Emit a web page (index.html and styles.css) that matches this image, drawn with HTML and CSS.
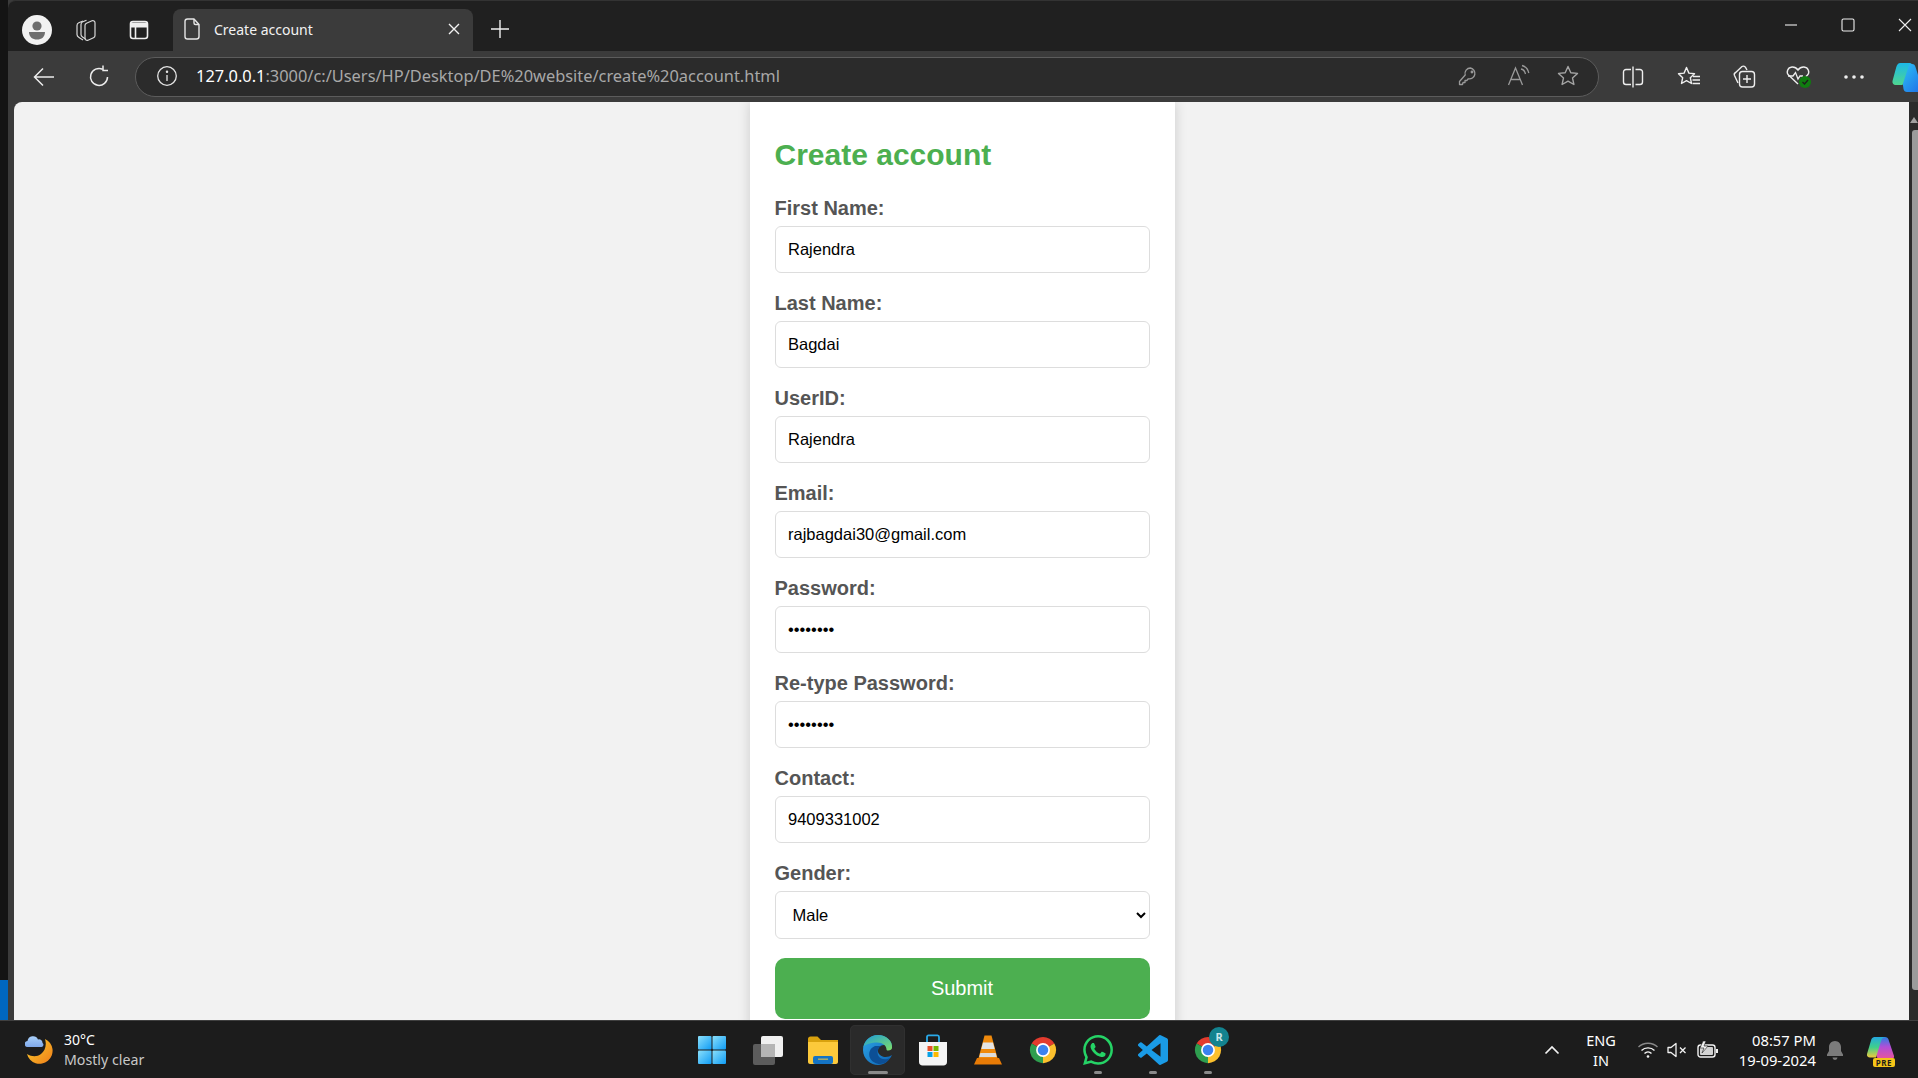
FILE: index.html
```html
<!DOCTYPE html>
<html lang="en">
<head>
<meta charset="utf-8">
<title>Create account</title>
<link rel="stylesheet" href="styles.css">
</head>
<body>
<svg class="defs" width="0" height="0" aria-hidden="true">
  <defs>
    <linearGradient id="copilot-a" x1="0" y1="0" x2="1" y2="1"><stop offset="0" stop-color="#2dc6f5"/><stop offset="1" stop-color="#1f6ee8"/></linearGradient>
    <linearGradient id="copilot-b" x1="0" y1="0" x2="0" y2="1"><stop offset="0" stop-color="#1cb8e8"/><stop offset="1" stop-color="#4fd68f"/></linearGradient>
    <linearGradient id="edge-a" x1="0" y1="0" x2="1" y2="1"><stop offset="0" stop-color="#2ea5e6"/><stop offset="1" stop-color="#0b63b5"/></linearGradient>
    <linearGradient id="edge-b" x1="0" y1="0" x2="1" y2="1"><stop offset="0" stop-color="#1c9bd6"/><stop offset="1" stop-color="#7fe06a"/></linearGradient>
    <linearGradient id="win" x1="0" y1="0" x2="1" y2="1"><stop offset="0" stop-color="#8be0fb"/><stop offset="1" stop-color="#0f9cf5"/></linearGradient>
    <linearGradient id="moon" x1="0" y1="0" x2="1" y2="1"><stop offset="0" stop-color="#fad02c"/><stop offset="1" stop-color="#ef7d1a"/></linearGradient>
    <linearGradient id="pre" x1="0" y1="0" x2="0" y2="1"><stop offset="0" stop-color="#25a8e0"/><stop offset=".5" stop-color="#3fd08a"/><stop offset="1" stop-color="#f0c93a"/></linearGradient>
    <linearGradient id="pre-b" x1="0" y1="0" x2="0" y2="1"><stop offset="0" stop-color="#2b7fe0"/><stop offset=".45" stop-color="#b04fd8"/><stop offset="1" stop-color="#e8559a"/></linearGradient>
    <linearGradient id="cloud" x1="0" y1="0" x2="0" y2="1"><stop offset="0" stop-color="#a9d0fa"/><stop offset="1" stop-color="#7fa8ea"/></linearGradient>
    <symbol id="chrome" viewBox="0 0 32 32">
      <path d="M16 16 3.9 9A14 14 0 0 1 28.1 9Z" fill="#e33b2e"/>
      <path d="M16 16 28.1 9A14 14 0 0 1 16 30Z" fill="#fbc02d"/>
      <path d="M16 16V30A14 14 0 0 1 3.9 9Z" fill="#2e9e4f"/>
      <circle cx="16" cy="16" r="7.4" fill="#fff"/>
      <circle cx="16" cy="16" r="5.6" fill="#3b82f0"/>
    </symbol>
  </defs>
</svg>

<div class="desktop">
  <div class="work">
    <div class="edge-strip"><div class="edge-strip-blue"></div></div>
    <div class="browser">
      <div class="tabstrip">
        <div class="strip-btn w50">
          <svg width="32" height="32" viewBox="0 0 32 32"><circle cx="16" cy="16" r="15" fill="#f2f2f2"/><circle cx="16" cy="12" r="4.6" fill="#6e6e6e"/><path d="M8 18h16c0 5-3.500 7.500-8 7.500S8 23 8 18z" fill="#6e6e6e"/></svg>
        </div>
        <div class="strip-btn w48">
          <svg width="24" height="24" viewBox="0 0 24 24" fill="none" stroke="#d8d8d8" stroke-width="1.200" stroke-linejoin="round"><path d="M9 22 5 19.500C3.800 18.800 3 17.800 3 16.500V7.500C3 6.300 3.700 5.300 4.800 4.800L9 3"/><path d="M11.500 21 8.500 19C7.600 18.400 7 17.500 7 16.500V6.500C7 5.300 7.700 4.300 8.800 3.800L12.500 2.200"/><path d="M11 7.500C11 6.500 11.600 5.700 12.500 5.300L18 2.800C19.500 2.200 21 3.200 21 4.700V17.500C21 18.500 20.400 19.300 19.500 19.700L14 22.200C12.500 22.800 11 21.800 11 20.300Z"/></svg>
        </div>
        <div class="strip-btn w58">
          <svg width="22" height="22" viewBox="0 0 22 22" fill="none" stroke="#eee" stroke-width="1.600"><rect x="2.500" y="2.500" width="17" height="17" rx="2.500"/><path d="M2.500 6h17" stroke-width="5"/><path d="M7.500 8v11"/></svg>
        </div>
        <div class="tab">
          <svg width="20" height="24" viewBox="0 0 20 24" fill="none" stroke="#e6e6e6" stroke-width="1.400" stroke-linejoin="round"><path d="M3 4.500C3 3.100 4.100 2 5.500 2H12l5 5.500v12c0 1.400-1.100 2.500-2.500 2.500h-9A2.500 2.500 0 0 1 3 19.500Z"/><path d="M12 2v4c0 1 .6 1.500 1.500 1.500H17"/></svg>
          <span class="tab-title">Create account</span>
          <svg class="tab-close" width="12" height="12" viewBox="0 0 12 12" stroke="#f2f2f2" stroke-width="1.400"><path d="M1 1l10 10M11 1 1 11"/></svg>
        </div>
        <div class="strip-btn w54 new-tab">
          <svg width="20" height="20" viewBox="0 0 20 20" stroke="#f0f0f0" stroke-width="1.400"><path d="M10 1v18M1 10h18"/></svg>
        </div>
        <div class="win-controls">
          <div class="win-btn"><svg width="14" height="14" viewBox="0 0 14 14" stroke="#eee" stroke-width="1.100"><path d="M1 7h12"/></svg></div>
          <div class="win-btn"><svg width="14" height="14" viewBox="0 0 14 14" fill="none" stroke="#eee" stroke-width="1.100"><rect x="1" y="1" width="12" height="12" rx="1.500"/></svg></div>
          <div class="win-btn"><svg width="14" height="14" viewBox="0 0 14 14" stroke="#eee" stroke-width="1.100"><path d="M1 1l12 12M13 1 1 13"/></svg></div>
        </div>
      </div>

      <div class="toolbar">
        <div class="tool-btn back">
          <svg width="24" height="24" viewBox="0 0 24 24" fill="none" stroke="#ececec" stroke-width="1.500"><path d="M22 12H2.500M11 3.500 2.500 12l8.500 8.500"/></svg>
        </div>
        <div class="tool-btn reload">
          <svg width="24" height="24" viewBox="0 0 24 24" fill="none" stroke="#ececec" stroke-width="1.500"><path d="M20.500 12A8.500 8.500 0 1 1 15.700 4.300"/><path d="M16 0.500v5h5"/></svg>
        </div>
        <div class="address">
          <svg class="addr-info" width="22" height="22" viewBox="0 0 22 22" fill="none" stroke="#e4e4e4" stroke-width="1.300"><circle cx="11" cy="11" r="9.300"/><path d="M11 10v6"/><circle cx="11" cy="6.800" r=".6" fill="#e4e4e4"/></svg>
          <span class="url"><span class="url-host">127.0.0.1</span>:3000/c:/Users/HP/Desktop/DE%20website/create%20account.html</span>
          <div class="addr-actions">
            <div class="addr-btn"><svg width="22" height="22" viewBox="0 0 22 22" fill="none" stroke="#9a9a9a" stroke-width="1.300" stroke-linejoin="round"><path d="M13.500 3a5.500 5.500 0 0 0-5.300 7l-5.700 6.500V19.500h3l.5-2h2v-2h1.800l1.500-1.700A5.500 5.500 0 1 0 13.500 3Z"/><circle cx="15" cy="7" r=".8"/></svg></div>
            <div class="addr-btn"><svg width="24" height="24" viewBox="0 0 24 24" fill="none" stroke="#9a9a9a" stroke-width="1.300"><path d="M2.500 21 9.500 4l7 17M5 15.500h9"/><path d="M15 5c2.500.5 4 2.500 4.500 5M16 1.500c3.500.8 6 3.500 6.800 7.500"/></svg></div>
            <div class="addr-btn"><svg width="24" height="24" viewBox="0 0 24 24" fill="none" stroke="#a5a5a5" stroke-width="1.400" stroke-linejoin="round"><path d="M12 2.500l2.800 6.200 6.700.7-5 4.500 1.400 6.600L12 17.200l-5.900 3.300 1.400-6.600-5-4.500 6.700-.7Z"/></svg></div>
          </div>
        </div>
        <div class="tool-right">
          <div class="tool-btn r56"><svg width="24" height="24" viewBox="0 0 24 24" fill="none" stroke="#eee" stroke-width="1.400"><path d="M10 4.500H5A2.500 2.500 0 0 0 2.500 7v10A2.500 2.500 0 0 0 5 19.500h5M14.500 4.500H19A2.500 2.500 0 0 1 21.500 7v10a2.500 2.500 0 0 1-2.500 2.500h-4.500M12 1.500v21"/></svg></div>
          <div class="tool-btn r56"><svg width="26" height="24" viewBox="0 0 26 24" fill="none" stroke="#eee" stroke-width="1.400" stroke-linejoin="round"><path d="M10.500 2.500l2.400 5.600 5.600.6-4.200 4 1.200 5.800-5-2.900-5 2.900 1.200-5.800-4.200-4 5.600-.6Z"/><path d="M17 11.500h7M16.500 15h7.500M16.500 18.500h7.500"/></svg></div>
          <div class="tool-btn r54"><svg width="26" height="26" viewBox="0 0 26 26" fill="none" stroke="#eee" stroke-width="1.400" stroke-linejoin="round"><path d="M7 19 3.500 11.500C3 10.300 3.500 9 4.700 8.500L11 2.500c1-.6 2.500-.2 3.500.8L16 6"/><rect x="8.500" y="7.500" width="15" height="15.500" rx="3"/><path d="M16 11v8M12 15h8"/></svg></div>
          <div class="tool-btn r56"><svg width="28" height="26" viewBox="0 0 28 26" fill="none"><path d="M13 20 3.500 11C1 8.300 2.500 3.500 7 3c2.500-.2 4.500 1 6 3 1.500-2 3.500-3.200 6-3 4.500.5 6 5.300 3.500 8l-2 2" stroke="#eee" stroke-width="1.400"/><path d="M3 12h5l2.500-3.500L13 15l2-3h3" stroke="#eee" stroke-width="1.300"/><circle cx="20" cy="18" r="6" fill="#107c10"/><path d="M17.500 18l2 2 3.500-4" stroke="#1d1d1d" stroke-width="1.400"/></svg></div>
          <div class="tool-btn r54"><svg width="22" height="6" viewBox="0 0 22 6" fill="#eee"><circle cx="3" cy="3" r="1.800"/><circle cx="11" cy="3" r="1.800"/><circle cx="19" cy="3" r="1.800"/></svg></div>
          <div class="tool-btn r-copilot"><svg width="34" height="30" viewBox="0 0 34 30"><path d="M8 2h12c2 0 3 1 3.500 3L30 26c.5 2-1 4-3 4H15c-2 0-3-1-3.500-3Z" fill="url(#copilot-a)"/><path d="M8.500 1C6 1 5 3 4.300 5L.5 19c-.5 2 1 4 3 4h7L16 6c.5-2.500 2-5 5-5Z" fill="url(#copilot-b)"/></svg></div>
        </div>
      </div>

      <div class="content">
        <main class="page">
          <form class="card">
            <h1 class="card-title">Create account</h1>
            <div class="field"><label class="field-label" for="first">First Name:</label><input class="field-input" id="first" type="text" value="Rajendra"></div>
            <div class="field"><label class="field-label" for="last">Last Name:</label><input class="field-input" id="last" type="text" value="Bagdai"></div>
            <div class="field"><label class="field-label" for="uid">UserID:</label><input class="field-input" id="uid" type="text" value="Rajendra"></div>
            <div class="field"><label class="field-label" for="email">Email:</label><input class="field-input" id="email" type="text" value="rajbagdai30@gmail.com"></div>
            <div class="field"><label class="field-label" for="pw">Password:</label><input class="field-input" id="pw" type="password" value="password"></div>
            <div class="field"><label class="field-label" for="pw2">Re-type Password:</label><input class="field-input" id="pw2" type="password" value="password"></div>
            <div class="field"><label class="field-label" for="contact">Contact:</label><input class="field-input" id="contact" type="text" value="9409331002"></div>
            <div class="field"><label class="field-label" for="gender">Gender:</label><select class="field-input field-select" id="gender"><option>Male</option><option>Female</option></select></div>
            <button class="submit" type="button">Submit</button>
          </form>
        </main>
        <div class="scrollbar"><div class="scroll-arrow"></div><div class="scroll-thumb"></div></div>
      </div>
    </div>
  </div>

  <footer class="taskbar">
    <div class="weather">
      <svg width="28" height="28" viewBox="0 0 28 28"><path d="M20 3a13 13 0 1 1-18 15c5 3 10 3 14 0 4-3 6-9 4-15Z" fill="url(#moon)"/><path d="M3 11a3 3 0 0 1-.5-6 5.500 5.500 0 0 1 10.500-1.500 3.500 3.500 0 0 1 4.500 3.500 2.200 2.200 0 0 1-1 4Z" fill="url(#cloud)"/></svg>
      <div class="weather-text"><div class="temp">30°C</div><div class="cond">Mostly clear</div></div>
    </div>

    <div class="apps">
      <div class="app app-start"><svg width="30" height="30" viewBox="0 0 30 30" fill="url(#win)"><rect x="1" y="1" width="13.500" height="13.500" rx="1"/><rect x="15.500" y="1" width="13.500" height="13.500" rx="1"/><rect x="1" y="15.500" width="13.500" height="13.500" rx="1"/><rect x="15.500" y="15.500" width="13.500" height="13.500" rx="1"/></svg></div>
      <div class="app"><svg width="32" height="30" viewBox="0 0 32 30"><rect x="1" y="9" width="22" height="21" rx="2" fill="#5c5c5c"/><rect x="9" y="1" width="22" height="21" rx="2" fill="#f0f0f0"/><rect x="9" y="9" width="14" height="13" fill="#b5b5b5"/></svg></div>
      <div class="app"><svg width="30" height="28" viewBox="0 0 30 28"><path d="M0 3c0-1.500 1-2.500 2.500-2.500h7L13 4h17v6H0Z" fill="#d9a20e"/><path d="M0 6h30v20c0 1-1 2-2 2H2c-1 0-2-1-2-2Z" fill="#fcc93b"/><rect x="5" y="20" width="20" height="8" rx="2" fill="#1574c4"/><rect x="10" y="22.500" width="10" height="1.400" fill="#fcc93b" opacity=".7"/></svg></div>
      <div class="app app-active"><svg width="32" height="32" viewBox="0 0 32 32"><path d="M30 21c-4 3-12 3-14-3-1-3 1-7 6-7 3 0 6 2 8 3 1-7-6-13-14-13C7 1 1 8 1 16c0 9 8 15 15 15 6 0 11-4 14-10Z" fill="url(#edge-a)"/><path d="M1.500 13C3 6 9 1 16 1c8 0 15 6 14 13-.2 1.500-1.500 2.500-4 2.500-1 0-1.500-.5-1.500-1 0-4-4-7-9-7-6 0-13 2-14.500 4.500Z" fill="url(#edge-b)"/><path d="M13 12c-5 2-7 7-5 12 1.500 3.500 6 6 10 6 5 0 8-3 10-6-4 2-10 2-12-3-1-3 0-7 3-9Z" fill="#0c4f96"/></svg></div>
      <div class="app"><svg width="30" height="32" viewBox="0 0 30 32"><path d="M9 9V3c0-1 .6-1.600 1.500-1.600h9C20.400 1.400 21 2 21 3v6" fill="none" stroke="#2aa9e8" stroke-width="1.800"/><path d="M1 8h28v20c0 2-1.500 3.500-3.500 3.500h-21C2.500 31.500 1 30 1 28Z" fill="#f4f4f4"/><rect x="9.500" y="12" width="5" height="5" fill="#e8502a"/><rect x="15.500" y="12" width="5" height="5" fill="#76b900"/><rect x="9.500" y="18" width="5" height="5" fill="#08a1e6"/><rect x="15.500" y="18" width="5" height="5" fill="#fdb900"/></svg></div>
      <div class="app"><svg width="28" height="32" viewBox="0 0 28 32"><path d="M10.500 1.500h7L24 26H4Z" fill="#f08a0c"/><path d="M9 8.500h10l1.700 6.500H7.300Z" fill="#e4e4e4"/><path d="M6.300 19h15.400l1 4H5.300Z" fill="#dcdcdc"/><path d="M3 24h22l3 6.500H0Z" fill="#e87b06"/></svg></div>
      <div class="app"><svg width="30" height="30"><use href="#chrome"/></svg></div>
      <div class="app app-open"><svg width="30" height="30" viewBox="0 0 24 24" fill="#25d366"><path d="M17.472 14.382c-.297-.149-1.758-.867-2.03-.967-.273-.099-.471-.148-.67.15-.197.297-.767.966-.94 1.164-.173.199-.347.223-.644.075-.297-.15-1.255-.463-2.39-1.475-.883-.788-1.48-1.761-1.653-2.059-.173-.297-.018-.458.13-.606.134-.133.298-.347.446-.52.149-.174.198-.298.298-.497.099-.198.05-.371-.025-.52-.075-.149-.669-1.612-.916-2.207-.242-.579-.487-.5-.669-.51-.173-.008-.371-.01-.57-.01-.198 0-.52.074-.792.372-.272.297-1.04 1.016-1.04 2.479 0 1.462 1.065 2.875 1.213 3.074.149.198 2.096 3.2 5.077 4.487.709.306 1.262.489 1.694.625.712.227 1.36.195 1.871.118.571-.085 1.758-.719 2.006-1.413.248-.694.248-1.289.173-1.413-.074-.124-.272-.198-.57-.347m-5.421 7.403h-.004a9.87 9.87 0 01-5.031-1.378l-.361-.214-3.741.982.998-3.648-.235-.374a9.86 9.86 0 01-1.51-5.26c.001-5.45 4.436-9.884 9.888-9.884 2.64 0 5.122 1.03 6.988 2.898a9.825 9.825 0 012.893 6.994c-.003 5.45-4.437 9.884-9.885 9.884m8.413-18.297A11.815 11.815 0 0012.05 0C5.495 0 .16 5.335.157 11.892c0 2.096.547 4.142 1.588 5.945L.057 24l6.305-1.654a11.882 11.882 0 005.683 1.448h.005c6.554 0 11.89-5.335 11.893-11.893a11.821 11.821 0 00-3.48-8.413z"/></svg></div>
      <div class="app app-open"><svg width="30" height="30" viewBox="0 0 24 24" fill="#1a9be6"><path d="M23.15 2.587L18.21.21a1.494 1.494 0 0 0-1.705.29l-9.46 8.63-4.12-3.128a.999.999 0 0 0-1.276.057L.327 7.261A1 1 0 0 0 .326 8.74L3.899 12 .326 15.26a1 1 0 0 0 .001 1.479L1.65 17.94a.999.999 0 0 0 1.276.057l4.12-3.128 9.46 8.63a1.492 1.492 0 0 0 1.704.29l4.942-2.377A1.5 1.5 0 0 0 24 20.06V3.939a1.5 1.5 0 0 0-.85-1.352zm-5.146 14.861L10.826 12l7.178-5.448v10.896z"/></svg></div>
      <div class="app app-open"><svg width="30" height="30"><use href="#chrome"/></svg><span class="badge">R</span></div>
    </div>

    <div class="tray">
      <div class="tray-item t34"><svg width="16" height="10" viewBox="0 0 16 10" fill="none" stroke="#f2f2f2" stroke-width="1.700"><path d="M1.500 8.500 8 2l6.500 6.500"/></svg></div>
      <div class="tray-item t64 lang">ENG<br>IN</div>
      <div class="tray-item t30"><svg width="22" height="18" viewBox="0 0 22 18" fill="none" stroke="#f2f2f2" stroke-width="1.400"><path d="M1.500 6c5-5 14-5 19 0" stroke="#888"/><path d="M4.500 9.500c3.500-3.500 9.500-3.500 13 0"/><path d="M7.500 12.500c2-2 5-2 7 0"/><circle cx="11" cy="15.500" r="1.300" fill="#f2f2f2" stroke="none"/></svg></div>
      <div class="tray-item t28"><svg width="20" height="16" viewBox="0 0 20 16" fill="none" stroke="#f2f2f2" stroke-width="1.300" stroke-linejoin="round"><path d="M1 5.500h3L9 1.500v13L4 10.500H1Z"/><path d="M13 5.500l5.500 5.500M18.500 5.500 13 11"/></svg></div>
      <div class="tray-item t34"><svg width="22" height="20" viewBox="0 0 22 20" fill="none" stroke="#f2f2f2" stroke-width="1.400"><rect x="1" y="5" width="17" height="12" rx="2.500"/><rect x="3" y="7" width="13" height="8" rx="1" fill="#f2f2f2" stroke="none" opacity=".85"/><path d="M20 9v4" stroke-width="2"/><path d="M6 1 3 8h4l-2 5 6-7H7l2-5Z" fill="#f2f2f2" stroke="#1c1c1c" stroke-width=".6"/></svg></div>
      <div class="clock">08:57 PM<br>19-09-2024</div>
      <div class="tray-item t38"><svg width="18" height="20" viewBox="0 0 18 20" fill="#7b7b7b"><path d="M9 1c-3.500 0-6 2.800-6 6v4L1 14.500V16h16v-1.500L15 11V7c0-3.200-2.500-6-6-6Z"/><path d="M6.500 17.500a2.500 2.500 0 0 0 5 0Z"/></svg></div>
      <div class="tray-item t54 pre-wrap">
        <svg width="30" height="28" viewBox="0 0 30 28"><path d="M8 1h11c2 0 3 1 3.500 2.500L28 20c.5 2-1 3-3 3H14c-2 0-3-1-3.500-3Z" fill="url(#pre-b)"/><path d="M9 1C6.500 1 5.500 2.500 5 4.500L1 18c-.5 2 1 3.500 3 3.500h6L15 5c.5-2 2-4 5-4Z" fill="url(#pre)"/></svg>
        <span class="pre-badge">PRE</span>
      </div>
    </div>
  </footer>
</div>
</body>
</html>
```

FILE: styles.css
```css
* { box-sizing: border-box; }

html, body {
  margin: 0;
  padding: 0;
  height: 100%;
  overflow: hidden;
  background: #1c1c1c;
}

.defs { position: absolute; }

.desktop {
  width: 1918px;
  height: 1078px;
  display: flex;
  flex-direction: column;
  overflow: hidden;
  font-family: "Noto Sans", "Open Sans", sans-serif;
}

.work {
  flex: 0 0 1020px;
  display: flex;
  min-height: 0;
}

.edge-strip {
  flex: 0 0 8px;
  background: #141414;
  display: flex;
  flex-direction: column;
  justify-content: flex-end;
}

.edge-strip-blue {
  height: 40px;
  background: #0067c0;
}

.browser {
  flex: 1;
  min-width: 0;
  display: flex;
  flex-direction: column;
  background: #3b3b3b;
}

/* tab strip */
.tabstrip {
  flex: 0 0 51px;
  display: flex;
  align-items: flex-end;
  background: #202020;
  border-top: 1px solid #333;
  border-top-left-radius: 8px;
  padding-left: 4px;
  color: #f2f2f2;
}

.strip-btn {
  height: 40px;
  margin-bottom: 1px;
  display: flex;
  align-items: center;
  justify-content: center;
  flex: none;
}

.new-tab { margin-bottom: 2px; }

.w50 { width: 50px; }
.w48 { width: 48px; }
.w58 { width: 58px; }
.w54 { width: 54px; }

.tab {
  flex: none;
  width: 300px;
  height: 42px;
  margin-left: 5px;
  padding: 0 12px 2px 9px;
  display: flex;
  align-items: center;
  background: #3b3b3b;
  border-radius: 8px 8px 0 0;
  font-size: 14px;
}

.tab-title {
  flex: 1;
  margin-left: 12px;
}

.tab-close { margin-right: 1px; }

.win-controls {
  display: flex;
  margin-left: auto;
  align-self: flex-start;
}

.win-btn {
  width: 57px;
  height: 48px;
  display: flex;
  align-items: center;
  justify-content: center;
}

.win-btn:last-child { width: 42px; justify-content: flex-end; padding-right: 6px; }

/* toolbar */
.toolbar {
  flex: 0 0 51px;
  display: flex;
  align-items: center;
  padding-left: 8px;
  overflow: hidden;
}

.tool-btn {
  flex: none;
  height: 40px;
  display: flex;
  align-items: center;
  justify-content: center;
}

.tool-btn svg { flex: none; }

.back { width: 56px; }
.reload { width: 54px; margin-right: 9px; }
.r56 { width: 56px; }
.r54 { width: 54px; }
.r-copilot { width: 37px; justify-content: flex-start; padding-left: 11px; }

.address {
  flex: 1;
  min-width: 0;
  height: 40px;
  margin-right: 6px;
  padding: 0 0 2px 20px;
  display: flex;
  align-items: center;
  background: #2b2b2b;
  border: 1.5px solid #5c5c5c;
  border-radius: 20px;
}

.addr-info { flex: none; }

.url {
  margin-left: 18px;
  font-size: 16.4px;
  color: #a8a8a8;
  white-space: nowrap;
}

.url-host { color: #fff; }

.addr-actions {
  display: flex;
  margin-left: auto;
  padding-right: 5px;
}

.addr-btn {
  width: 50px;
  height: 36px;
  display: flex;
  align-items: center;
  justify-content: center;
}

.tool-right {
  flex: none;
  display: flex;
  width: 313px;
}

/* page */
.content {
  flex: 1;
  min-height: 0;
  display: flex;
  padding-left: 6px;
}

.page {
  flex: 1;
  min-width: 0;
  padding-left: 1px;
  background: #f2f2f2;
  border-top-left-radius: 8px;
  display: flex;
  justify-content: center;
  overflow: hidden;
  font-family: "Liberation Sans", Arial, sans-serif;
}

.card {
  flex: none;
  width: 425px;
  height: 1000px;
  padding: 34px 25px 0;
  background: #fff;
  box-shadow: 0 0 12px rgba(0, 0, 0, 0.16);
}

.card-title {
  margin: 0 0 24px;
  font-size: 30px;
  line-height: 37px;
  font-weight: 700;
  color: #4caf50;
}

.field { margin-bottom: 19px; }

.field-label {
  display: block;
  margin-bottom: 6px;
  font-size: 20px;
  line-height: 23px;
  font-weight: 700;
  color: #555;
}

.field-input {
  display: block;
  width: 100%;
  height: 47px;
  padding: 0 12.5px;
  font-family: "Liberation Sans", Arial, sans-serif;
  font-size: 16.5px;
  color: #000;
  background: #fff;
  border: 1.5px solid #ddd;
  border-radius: 6px;
  outline: none;
}

.field-select {
  height: 48px;
  padding: 0 13px;
}

.submit {
  display: block;
  width: 100%;
  height: 61px;
  font-family: "Liberation Sans", Arial, sans-serif;
  font-size: 20px;
  color: #fff;
  background: #4caf50;
  border: none;
  border-radius: 10px;
}

.scrollbar {
  flex: 0 0 8px;
  background: #2b2b2b;
  padding: 15px 0 0 3px;
}

.scroll-arrow {
  width: 0;
  height: 0;
  border-left: 4px solid transparent;
  border-right: 4px solid transparent;
  border-bottom: 6px solid #a0a0a0;
  margin-left: -2px;
}

.scroll-thumb {
  margin-top: 7px;
  height: 860px;
  background: #9b9b9b;
  border-radius: 3px 0 0 3px;
}

/* taskbar */
.taskbar {
  flex: 0 0 58px;
  display: grid;
  grid-template-columns: 1fr auto 1fr;
  align-items: center;
  background: #1c1c1c;
  border-top: 1px solid #3f3f3f;
  color: #fff;
}

.weather {
  display: flex;
  align-items: center;
  padding-left: 25px;
  gap: 11px;
}

.temp {
  font-size: 14px;
  line-height: 20px;
  color: #fff;
}

.cond {
  font-size: 14.2px;
  line-height: 20px;
  color: #c8c8c8;
}

.apps {
  display: flex;
  margin-left: 2px;
}

.app {
  position: relative;
  width: 55px;
  height: 50px;
  display: flex;
  align-items: center;
  justify-content: center;
  border-radius: 5px;
}

.app-start svg { margin-right: 2px; }

.app-active {
  background: #2a2a2a;
  outline: 1px solid #303030;
  outline-offset: -1px;
}

.app-active::after,
.app-open::after {
  content: "";
  position: absolute;
  bottom: 1px;
  left: 50%;
  transform: translateX(-50%);
  width: 8px;
  height: 3px;
  border-radius: 2px;
  background: #8a8a8a;
}

.app-active::after { width: 20px; }

.badge {
  position: absolute;
  top: 2px;
  right: 6px;
  width: 20px;
  height: 20px;
  border-radius: 50%;
  background: #13838f;
  color: #c8e6ea;
  font-size: 11px;
  font-weight: 700;
  line-height: 20px;
  text-align: center;
}

.tray {
  display: flex;
  align-items: center;
  justify-content: flex-end;
  padding-right: 10px;
}

.tray-item {
  flex: none;
  display: flex;
  align-items: center;
  justify-content: center;
}

.t28 { width: 28px; }
.t30 { width: 30px; }
.t34 { width: 34px; }
.t38 { width: 38px; }
.t54 { width: 54px; }
.t64 { width: 64px; }

.lang {
  display: block;
  font-size: 14.5px;
  line-height: 20px;
  text-align: center;
}

.clock {
  flex: none;
  width: 91px;
  font-size: 14.8px;
  line-height: 20px;
  text-align: right;
  white-space: nowrap;
}

.pre-wrap {
  position: relative;
  height: 36px;
}

.pre-badge {
  position: absolute;
  right: 13px;
  bottom: 1px;
  padding: 0 3px;
  background: #f5c518;
  border-radius: 2px;
  color: #1c1c1c;
  font-size: 8px;
  font-weight: 700;
  line-height: 9px;
  letter-spacing: 0.5px;
}
```
